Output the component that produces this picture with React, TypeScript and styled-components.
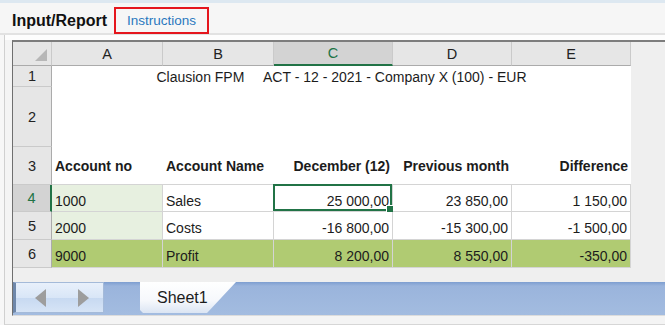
import { Fragment } from "react";
import styled, { createGlobalStyle, css } from "styled-components";

const GlobalStyle = createGlobalStyle`
  html, body {
    margin: 0;
    padding: 0;
    background: #f7f7f7;
    font-family: "Liberation Sans", Arial, sans-serif;
  }
`;

const Page = styled.div`
  width: 665px;
  height: 325px;
  display: flex;
  flex-direction: column;
  overflow: hidden;
`;

const TopStrip = styled.div`
  height: 3px;
  background: #dde8f1;
`;

const TabBar = styled.div`
  height: 30px;
  display: flex;
  align-items: flex-end;
  padding-left: 12px;
  background: #f6f6f6;
  border-bottom: 2px solid #e2e2e2;
`;

const Tab = styled.div<{ $active?: boolean; $marked?: boolean }>`
  height: 27px;
  box-sizing: border-box;
  display: flex;
  align-items: center;
  margin-bottom: -1px;
  ${(p) =>
    p.$active
      ? css`
          font-size: 16px;
          font-weight: bold;
          color: #111;
          padding-top: 1px;
        `
      : css`
          font-size: 13.5px;
          color: #2a78be;
        `}
  ${(p) =>
    p.$marked &&
    css`
      margin-left: 7px;
      width: 95px;
      justify-content: center;
      border: 2px solid #e5161d;
    `}
`;

const Frame = styled.div`
  flex: 1;
  display: flex;
  flex-direction: column;
  margin-left: 4px;
  padding: 5px 0 3px 7px;
  border-left: 1px solid #d0d0d0;
  border-bottom: 1px solid #d6d6d6;
  background: #f4f4f4;
`;

const TopGap = styled.div`
  height: 5px;
  margin: -5px 0 0 -7px;
  background: #fdfdfd;
`;

const Workbook = styled.div`
  display: flex;
  flex-direction: column;
  background: #efefef;
  border-top: 2px solid #7d7d7d;
  border-left: 1px solid #6f6f6f;
  border-bottom: 1px solid #dcdcdc;
`;

const Grid = styled.div`
  display: grid;
  grid-template-columns: 39px 111px 111px 119px 119px 119px;
  grid-template-rows: 24px 21px 60px 38px 27px 28px 28px;
  width: 618px;
  font-size: 14px;
  color: #1c1c1c;
`;

const Corner = styled.div`
  display: flex;
  align-items: flex-end;
  justify-content: flex-end;
  padding: 0 4px 4px 0;
  box-sizing: border-box;
  background: #e6e6e6;
  border-right: 1px solid #cacaca;
  border-bottom: 1px solid #ababab;

  span {
    width: 0;
    height: 0;
    border-left: 12px solid transparent;
    border-bottom: 12px solid #b7b7b7;
  }
`;

const ColHead = styled.div<{ $selected?: boolean }>`
  display: flex;
  align-items: center;
  justify-content: center;
  box-sizing: border-box;
  font-size: 14.5px;
  background: ${(p) => (p.$selected ? "#d3d3d3" : "#e6e6e6")};
  color: ${(p) => (p.$selected ? "#217346" : "#222")};
  border-right: 1px solid #cacaca;
  border-bottom: ${(p) => (p.$selected ? "2px solid #217346" : "1px solid #ababab")};
`;

const RowHead = styled.div<{ $selected?: boolean }>`
  display: flex;
  align-items: center;
  justify-content: center;
  box-sizing: border-box;
  font-size: 14.5px;
  background: ${(p) => (p.$selected ? "#d3d3d3" : "#e6e6e6")};
  color: ${(p) => (p.$selected ? "#217346" : "#222")};
  border-bottom: 1px solid #cacaca;
  border-right: ${(p) => (p.$selected ? "2px solid #217346" : "1px solid #ababab")};
`;

const Cell = styled.div<{
  $bg?: string;
  $align?: "left" | "right" | "center";
  $bold?: boolean;
  $span?: number;
  $lines?: "none" | "bottom" | "all";
}>`
  position: relative;
  display: flex;
  align-items: center;
  box-sizing: border-box;
  padding: 0 3px 0 3px;
  white-space: pre;
  background: ${(p) => p.$bg ?? "#fff"};
  font-weight: ${(p) => (p.$bold ? "bold" : "normal")};
  justify-content: ${(p) =>
    p.$align === "right" ? "flex-end" : p.$align === "center" ? "center" : "flex-start"};
  ${(p) => p.$span && `grid-column: span ${p.$span};`}
  ${(p) =>
    p.$lines === "all" &&
    css`
      padding-top: 5px;
      border-right: 1px solid #d4d4d4;
      border-bottom: 1px solid #d4d4d4;
    `}
  ${(p) =>
    p.$lines === "bottom" &&
    css`
      border-bottom: 1px solid #d4d4d4;
    `}
`;

const Selection = styled.div`
  position: absolute;
  inset: -1px 0 0 -1px;
  border: 2px solid #217346;
  pointer-events: none;

  &::after {
    content: "";
    position: absolute;
    right: -4px;
    bottom: -4px;
    width: 6px;
    height: 6px;
    background: #217346;
    border: 1px solid #fff;
  }
`;

const Filler = styled.div`
  height: 14px;
`;

const SheetBar = styled.div`
  height: 33px;
  display: flex;
  align-items: flex-start;
  background: linear-gradient(to bottom, #7d9ed0 0px, #9ab4dc 4px, #a3bce0 100%);
`;

const Nav = styled.div`
  width: 91px;
  height: 31px;
  box-sizing: border-box;
  display: flex;
  align-items: center;
  justify-content: space-between;
  padding: 0 14px 0 19px;
  border: 1px solid #a4bad9;
  border-left: 3px solid #6e87aa;
  background: linear-gradient(to bottom, #e8f0fb 0%, #d9e6f7 50%, #c7d9f1 51%, #d6e4f6 100%);
`;

const Arrow = styled.span<{ $dir: "left" | "right" }>`
  width: 0;
  height: 0;
  border-top: 9px solid transparent;
  border-bottom: 9px solid transparent;
  ${(p) =>
    p.$dir === "left"
      ? css`
          border-right: 11px solid #9d9d9d;
        `
      : css`
          border-left: 11px solid #9d9d9d;
        `}
`;

const SheetTab = styled.div`
  margin-left: 36px;
  width: 96px;
  height: 31px;
  display: flex;
  align-items: center;
  padding-left: 17px;
  box-sizing: border-box;
  font-size: 16px;
  color: #1d1d1d;
  background: linear-gradient(to bottom, #ffffff 0%, #f6f8fc 60%, #dbe5f3 100%);
  clip-path: polygon(0 0, 100% 0, calc(100% - 29px) 100%, 3px 100%, 0 calc(100% - 3px));
`;

const columns = ["A", "B", "C", "D", "E"];

type Row = {
  no: number;
  cells: string[];
  accountBg: string;
  rowBg: string;
};

const rows: Row[] = [
  { no: 4, cells: ["1000", "Sales", "25 000,00", "23 850,00", "1 150,00"], accountBg: "#e7f0e0", rowBg: "#fff" },
  { no: 5, cells: ["2000", "Costs", "-16 800,00", "-15 300,00", "-1 500,00"], accountBg: "#e7f0e0", rowBg: "#fff" },
  { no: 6, cells: ["9000", "Profit", "8 200,00", "8 550,00", "-350,00"], accountBg: "#b0cb72", rowBg: "#b0cb72" },
];

const headings = ["Account no", "Account Name", "December (12)", "Previous month", "Difference"];

export default function App() {
  return (
    <Page>
      <GlobalStyle />
      <TopStrip />
      <TabBar>
        <Tab $active>Input/Report</Tab>
        <Tab $marked>Instructions</Tab>
      </TabBar>
      <Frame>
        <TopGap />
        <Workbook>
          <Grid>
            <Corner>
              <span />
            </Corner>
            {columns.map((c) => (
              <ColHead key={c} $selected={c === "C"}>
                {c}
              </ColHead>
            ))}

            <RowHead>1</RowHead>
            <Cell $span={5} $align="center">
              {"Clausion FPM     ACT - 12 - 2021 - Company X (100) - EUR"}
            </Cell>

            <RowHead>2</RowHead>
            <Cell $span={5} />

            <RowHead>3</RowHead>
            {headings.map((h, i) => (
              <Cell key={h} $bold $lines="bottom" $align={i < 2 ? "left" : "right"}>
                {h}
              </Cell>
            ))}

            {rows.map((r) => (
              <Fragment key={r.no}>
                <RowHead $selected={r.no === 4}>{r.no}</RowHead>
                {r.cells.map((v, i) => (
                  <Cell
                    key={i}
                    $lines="all"
                    $align={i < 2 ? "left" : "right"}
                    $bg={i === 0 ? r.accountBg : r.rowBg}
                  >
                    {v}
                    {r.no === 4 && i === 2 && <Selection />}
                  </Cell>
                ))}
              </Fragment>
            ))}
          </Grid>
          <Filler />
          <SheetBar>
            <Nav>
              <Arrow $dir="left" />
              <Arrow $dir="right" />
            </Nav>
            <SheetTab>Sheet1</SheetTab>
          </SheetBar>
        </Workbook>
      </Frame>
    </Page>
  );
}
